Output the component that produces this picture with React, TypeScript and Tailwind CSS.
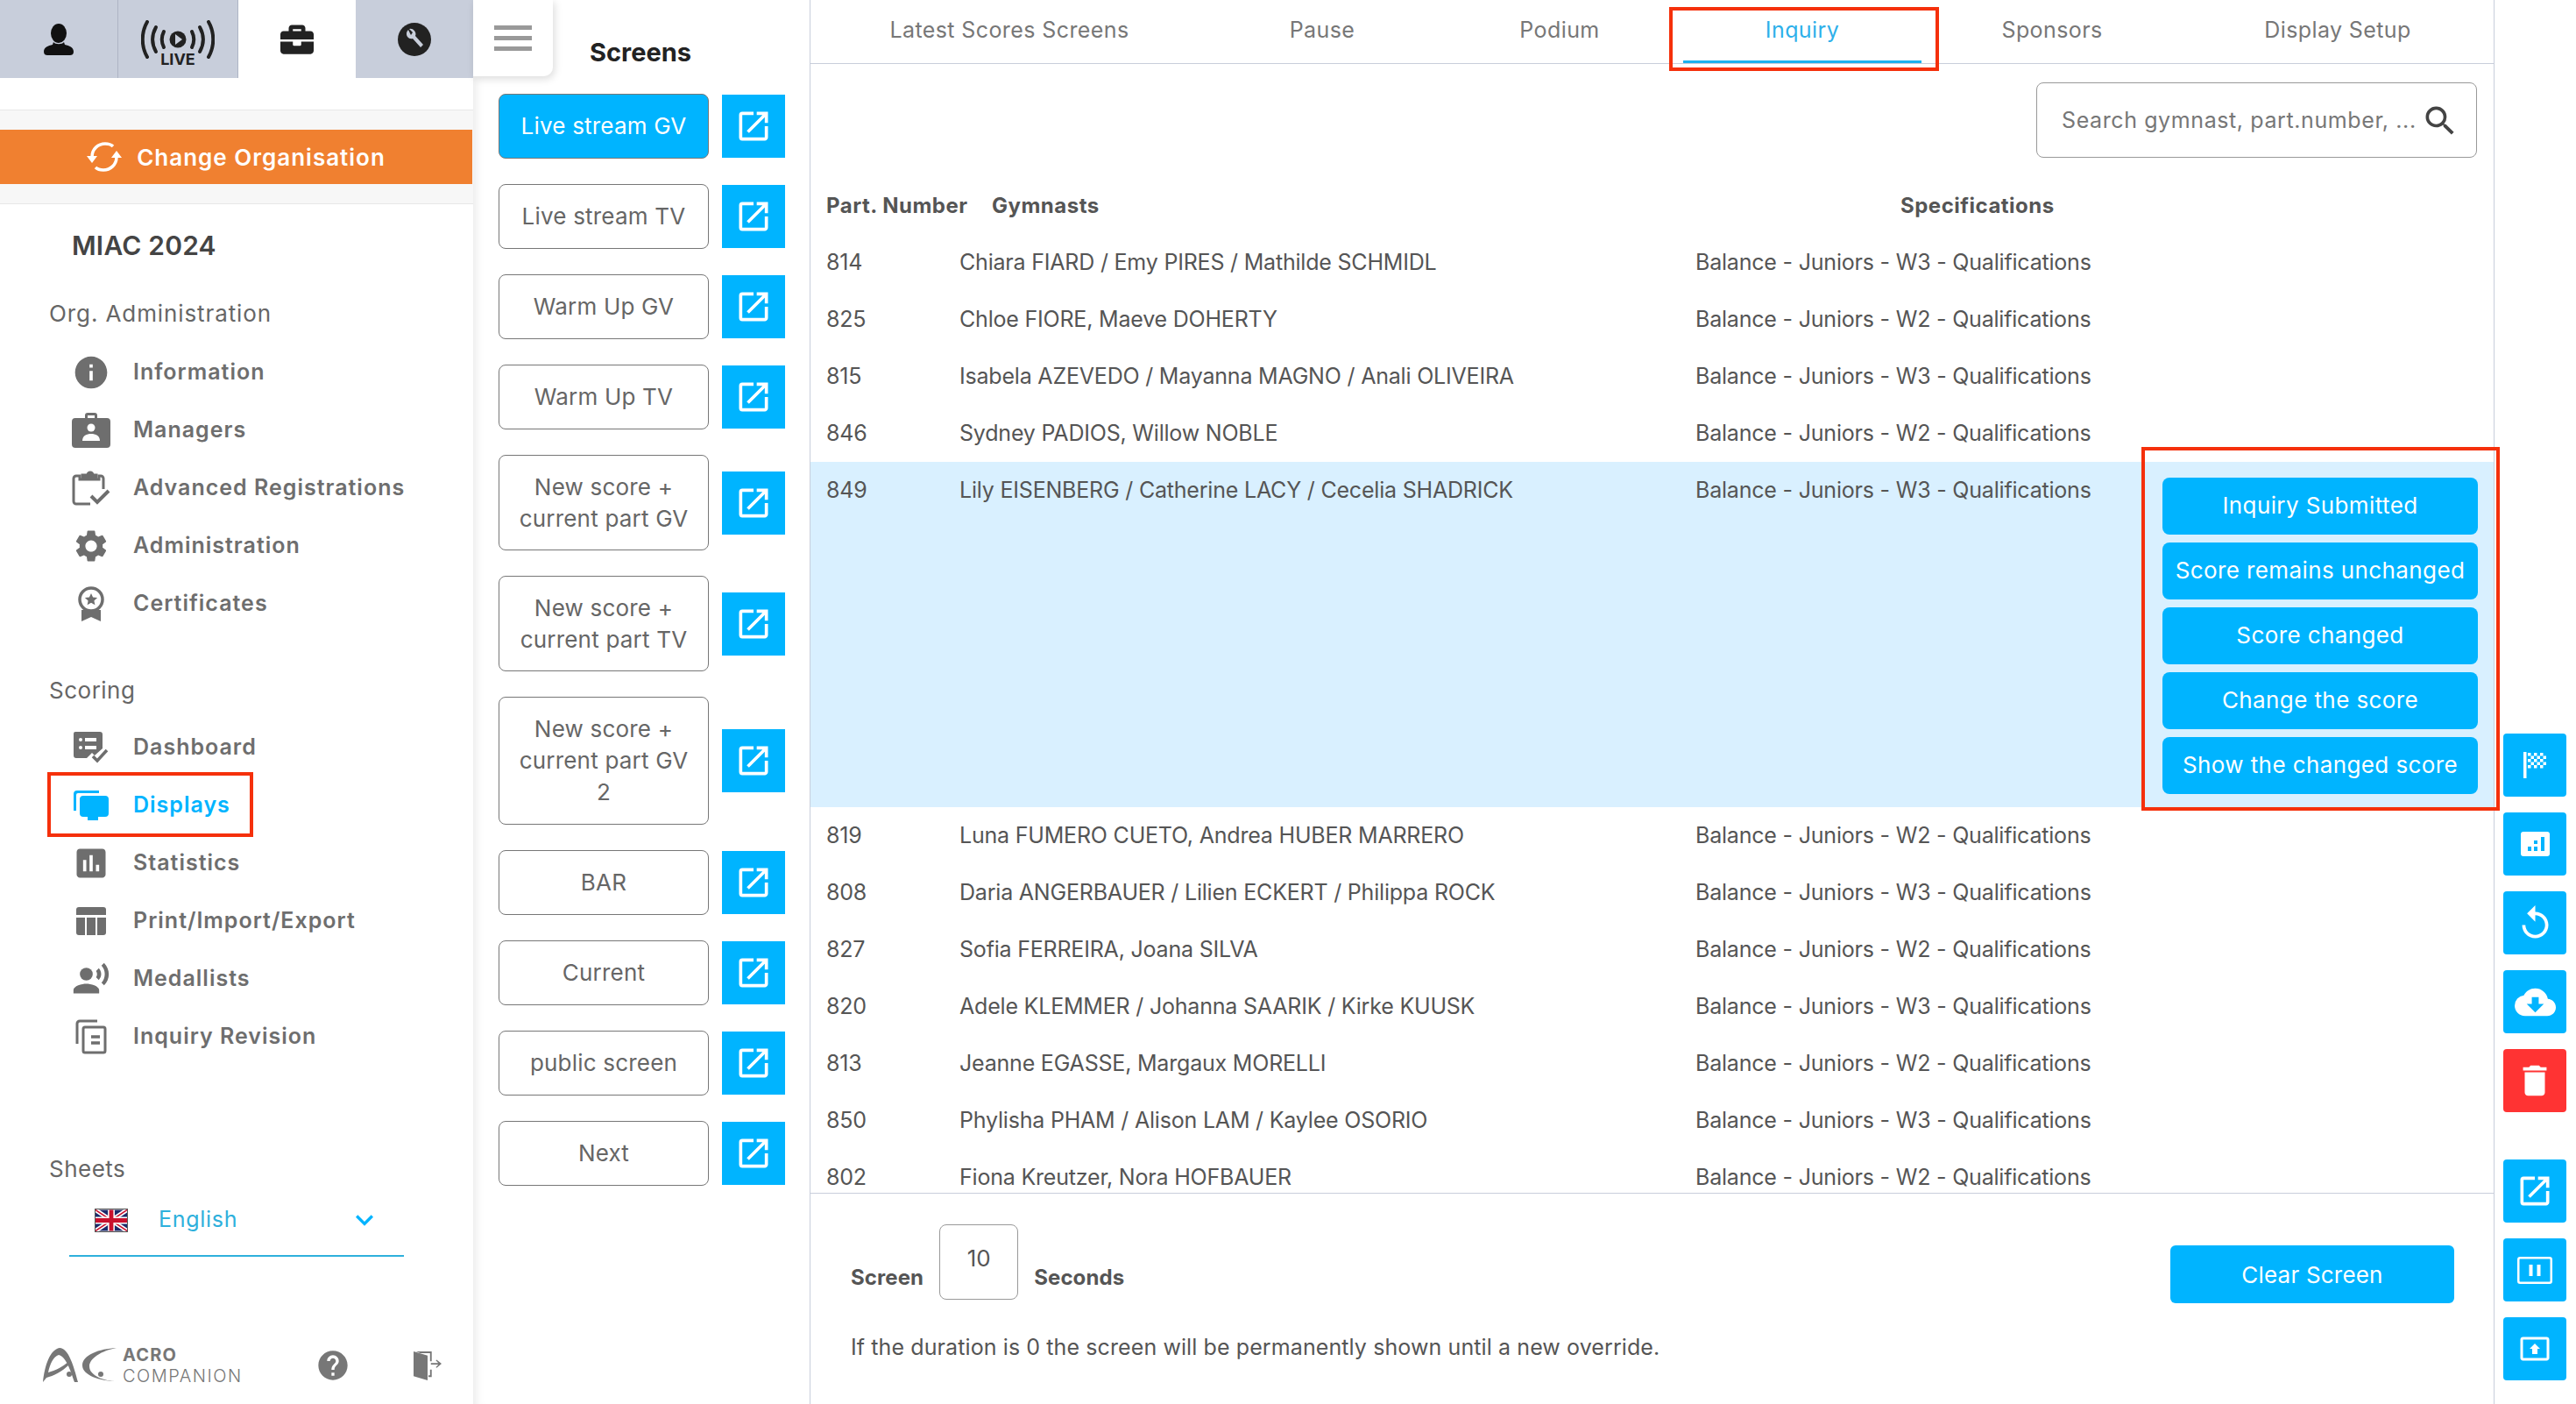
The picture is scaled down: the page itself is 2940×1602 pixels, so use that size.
import {
  MdAssessment,
  MdCloudDownload,
  MdDelete,
  MdHelp,
  MdInfo,
  MdKeyboardArrowDown,
  MdOpenInNew,
  MdPresentToAll,
  MdRecordVoiceOver,
  MdReplay,
  MdSearch,
  MdSettings,
} from "react-icons/md";
import { FaBriefcase } from "react-icons/fa";
import type { ReactNode } from "react";

const tabs = [
  { label: "Latest Scores Screens", w: "w-[454px]" },
  { label: "Pause", w: "w-[260px]" },
  { label: "Podium", w: "w-[282px]" },
  { label: "Inquiry", w: "w-[272px]", active: true },
  { label: "Sponsors", w: "w-[298px]" },
  { label: "Display Setup", w: "w-[354px]" },
];

const screens = [
  { label: "Live stream GV", h: "h-[74px]", active: true },
  { label: "Live stream TV", h: "h-[74px]" },
  { label: "Warm Up GV", h: "h-[74px]" },
  { label: "Warm Up TV", h: "h-[74px]" },
  { label: "New score + current part GV", h: "h-[109px]" },
  { label: "New score + current part TV", h: "h-[109px]" },
  { label: "New score + current part GV 2", h: "h-[146px]" },
  { label: "BAR", h: "h-[74px]" },
  { label: "Current", h: "h-[74px]" },
  { label: "public screen", h: "h-[74px]" },
  { label: "Next", h: "h-[74px]" },
];

const before = [
  ["814", "Chiara FIARD / Emy PIRES / Mathilde SCHMIDL", "W3"],
  ["825", "Chloe FIORE, Maeve DOHERTY", "W2"],
  ["815", "Isabela AZEVEDO / Mayanna MAGNO / Anali OLIVEIRA", "W3"],
  ["846", "Sydney PADIOS, Willow NOBLE", "W2"],
];

const after = [
  ["819", "Luna FUMERO CUETO, Andrea HUBER MARRERO", "W2"],
  ["808", "Daria ANGERBAUER / Lilien ECKERT / Philippa ROCK", "W3"],
  ["827", "Sofia FERREIRA, Joana SILVA", "W2"],
  ["820", "Adele KLEMMER / Johanna SAARIK / Kirke KUUSK", "W3"],
  ["813", "Jeanne EGASSE, Margaux MORELLI", "W2"],
  ["850", "Phylisha PHAM / Alison LAM / Kaylee OSORIO", "W3"],
  ["802", "Fiona Kreutzer, Nora HOFBAUER", "W2"],
];

const inquiryActions = [
  "Inquiry Submitted",
  "Score remains unchanged",
  "Score changed",
  "Change the score",
  "Show the changed score",
];

function PersonIcon() {
  return (
    <svg width="34" height="36" viewBox="0 0 34 36" fill="#111">
      <ellipse cx="17" cy="11" rx="9" ry="11" />
      <path d="M11 21c2 3 10 3 12 0l1 3c5 1 10 3 10 8 0 3-2 4-4 4H4c-2 0-4-1-4-4 0-5 5-7 10-8z" />
    </svg>
  );
}

function LiveIcon() {
  return (
    <svg width="84" height="44" viewBox="0 0 84 44" fill="none" stroke="#222" strokeLinecap="round">
      <path d="M7 2C0 14 0 30 7 42M77 2c7 12 7 28 0 40" strokeWidth="4" />
      <path d="M17 8c-5 9-5 19 0 28M67 8c5 9 5 19 0 28" strokeWidth="4" />
      <path d="M26 13c-3 6-3 12 0 18M58 13c3 6 3 12 0 18" strokeWidth="4" />
      <circle cx="42" cy="22" r="9.5" fill="#222" stroke="none" />
      <path d="M39 16l8 6-8 6z" fill="#c8cedb" stroke="none" />
    </svg>
  );
}

function WrenchIcon() {
  return (
    <svg width="38" height="38" viewBox="0 0 38 38">
      <circle cx="19" cy="19" r="19" fill="#222" />
      <path d="M12 8a6 6 0 0 0-1 8 6 6 0 0 0 6 2l9 10 3-3-9-10a6 6 0 0 0-7-8l4 4-2 3-3-6z" fill="#c8cedb" />
    </svg>
  );
}

function SwapIcon() {
  return (
    <svg width="40" height="36" viewBox="0 0 40 36" fill="none" stroke="#fff" strokeWidth="3.5">
      <path d="M6 18C6 9 13 3 21 3c4 0 7 1 9 3" />
      <path d="M34 18c0 9-7 15-15 15-4 0-7-1-9-3" />
      <path d="M0 17h12l-6 8zM28 19h12l-6-8z" fill="#fff" stroke="none" />
    </svg>
  );
}

function ManagersIcon() {
  return (
    <svg width="44" height="40" viewBox="0 0 44 40" fill="currentColor">
      <path d="M15 6V3a3 3 0 0 1 3-3h8a3 3 0 0 1 3 3v3h11a4 4 0 0 1 4 4v26a4 4 0 0 1-4 4H4a4 4 0 0 1-4-4V10a4 4 0 0 1 4-4zm3 0h8V3h-8z" />
      <circle cx="22" cy="17" r="4.5" fill="#fff" />
      <path d="M12 32c0-6 5-8 10-8s10 2 10 8z" fill="#fff" />
    </svg>
  );
}

function ClipboardIcon() {
  return (
    <svg width="44" height="42" viewBox="0 0 44 42" fill="none" stroke="currentColor" strokeWidth="3">
      <path d="M21 39H5a3 3 0 0 1-3-3V10a3 3 0 0 1 3-3h4v4h22V7h2a3 3 0 0 1 3 3v12" />
      <path d="M12 9V6h6a3 3 0 0 1 6 0h4v4H12z" fill="currentColor" />
      <path d="M22 30l7 7 13-13" strokeWidth="4" />
    </svg>
  );
}

function CertificateIcon() {
  return (
    <svg width="32" height="40" viewBox="0 0 32 40" fill="currentColor">
      <circle cx="16" cy="15" r="13" fill="none" stroke="currentColor" strokeWidth="3.5" />
      <path d="M16 8l2.1 4.6 5 .5-3.7 3.3 1 4.9-4.4-2.5-4.4 2.5 1-4.9-3.7-3.3 5-.5z" />
      <path d="M5 27h22v13l-11-5-11 5z" />
    </svg>
  );
}

function DashboardIcon() {
  return (
    <svg width="40" height="36" viewBox="0 0 40 36" fill="currentColor">
      <path d="M2 0h28a3 3 0 0 1 3 3v16l-9 8-3-3-6 6H3a3 3 0 0 1-3-3V2a2 2 0 0 1 2-2z" />
      <circle cx="8" cy="9" r="2" fill="#fff" />
      <circle cx="8" cy="18" r="2" fill="#fff" />
      <path d="M13 7h13v4H13zM13 16h13v4H13z" fill="#fff" />
      <path d="M22 28l5 5 11-12" fill="none" stroke="currentColor" strokeWidth="3.5" />
    </svg>
  );
}

function DisplaysIcon() {
  return (
    <svg width="40" height="36" viewBox="0 0 40 36" fill="currentColor">
      <path d="M0 24V5a4 4 0 0 1 4-4h25v3H5a2 2 0 0 0-2 2v18z" />
      <path d="M11 7h25a4 4 0 0 1 4 4v16a4 4 0 0 1-4 4h-8v4H16v-4h-5a4 4 0 0 1-4-4V11a4 4 0 0 1 4-4z" />
    </svg>
  );
}

function PrintIcon() {
  return (
    <svg width="34" height="32" viewBox="0 0 34 32" fill="currentColor">
      <path d="M3 0h28a3 3 0 0 1 3 3v6H0V3a3 3 0 0 1 3-3z" />
      <path d="M0 12h10v20H3a3 3 0 0 1-3-3zM12 12h10v20H12zM24 12h10v17a3 3 0 0 1-3 3h-7z" />
    </svg>
  );
}

function InquiryIcon() {
  return (
    <svg width="36" height="40" viewBox="0 0 36 40" fill="none" stroke="currentColor" strokeWidth="3">
      <path d="M2 28V5a3 3 0 0 1 3-3h20" />
      <rect x="9" y="9" width="25" height="29" rx="2" />
      <path d="M18 20h10M18 27h10" strokeWidth="3.5" />
    </svg>
  );
}

function DoorIcon() {
  return (
    <svg width="32" height="36" viewBox="0 0 34 36" fill="currentColor">
      <path d="M0 1l17 5v30L0 31z" />
      <path d="M3 1h19v12h-2V3H8zM22 23v9h-4v-2h2v-7z" />
      <path d="M21 15h9l-3-3 1-1 6 5-6 5-1-1 3-3h-9z" />
    </svg>
  );
}

function UkFlag() {
  return (
    <svg width="38" height="27" viewBox="0 0 60 40" className="border border-[#555]">
      <rect width="60" height="40" fill="#1b2a6b" />
      <path d="M0 0l60 40M60 0L0 40" stroke="#fff" strokeWidth="8" />
      <path d="M0 0l60 40M60 0L0 40" stroke="#c8102e" strokeWidth="2.5" />
      <path d="M30 0v40M0 20h60" stroke="#fff" strokeWidth="13" />
      <path d="M30 0v40M0 20h60" stroke="#c8102e" strokeWidth="8" />
    </svg>
  );
}

function AcroLogo() {
  return (
    <div className="flex w-[230px] items-center gap-[7px] text-[#777]">
      <svg width="85" height="40" viewBox="0 0 85 40" fill="currentColor" className="shrink-0">
        <path d="M1 39C3 20 9 2 20 0c10 0 16 20 21 39h-4C32 24 27 10 19 8 13 10 9 18 7 28c8-2 17-7 23-12l1 3C23 27 13 32 5 34z" />
        <circle cx="31" cy="30" r="3" />
        <path d="M85 0C65 1 46 8 46 20c0 11 20 18 39 18-13 0-31-6-31-17C54 12 68 3 85 0z" />
        <circle cx="67" cy="30" r="3" />
      </svg>
      <div className="flex flex-col">
        <span className="text-[20px] font-bold leading-[24px] tracking-[1.2px]">ACRO</span>
        <span className="text-[20px] font-light leading-[24px] tracking-[1.5px]">COMPANION</span>
      </div>
    </div>
  );
}

function NavItem({ icon, label, active }: { icon: ReactNode; label: string; active?: boolean }) {
  return (
    <div className={`flex h-[66px] items-center ${active ? "text-[#00b4ff]" : "text-[#6e6e6e]"}`}>
      <div className="flex w-[152px] justify-center pl-[56px]">{icon}</div>
      <span className="text-[25px] font-semibold tracking-[1px]">{label}</span>
    </div>
  );
}

function SideButton({ children, red }: { children: ReactNode; red?: boolean }) {
  return (
    <div className={`flex size-[72px] items-center justify-center rounded-[4px] text-white ${red ? "bg-[#ff3333]" : "bg-[#00b4ff]"}`}>
      {children}
    </div>
  );
}

function Row({ num, name, level }: { num: string; name: string; level: string }) {
  return (
    <div className="flex h-[65px] shrink-0 items-center pl-[18px] text-[25px] tracking-[-0.2px] text-[#555]">
      <span className="w-[152px]">{num}</span>
      <span className="w-[840px]">{name}</span>
      <span>Balance - Juniors - {level} - Qualifications</span>
    </div>
  );
}

function CheckerFlag() {
  const cells: ReactNode[] = [];
  for (let r = 0; r < 5; r++) {
    for (let c = 0; c < 6; c++) {
      if ((r + c) % 2 === 0) {
        cells.push(<rect key={`${r}-${c}`} x={5 + c * 3.5} y={1 + r * 3.5} width="3.5" height="3.5" />);
      }
    }
  }
  return (
    <svg width="27" height="30" viewBox="0 0 27 30" fill="#fff">
      <rect x="0" y="0" width="3.5" height="30" />
      {cells}
    </svg>
  );
}

export default function App() {
  return (
    <div className="relative flex h-[1602px] w-[2940px] overflow-hidden bg-white font-['Inter',sans-serif]">
      {/* left menu */}
      <aside className="flex w-[540px] shrink-0 flex-col">
        <div className="flex h-[89px] shrink-0 bg-[#c8cedb] text-[#222]">
          <div className="flex w-[135px] items-center justify-center border-r border-[#aeb5c5]">
            <PersonIcon />
          </div>
          <div className="flex w-[137px] flex-col items-center border-r border-[#aeb5c5] pt-[23px]">
            <LiveIcon />
            <span className="mt-[-8px] text-[18px] font-bold leading-[18px]">LIVE</span>
          </div>
          <div className="flex w-[134px] items-center justify-center bg-white">
            <FaBriefcase size={38} />
          </div>
          <div className="flex flex-1 items-center justify-center">
            <WrenchIcon />
          </div>
        </div>
        <div className="h-[37px] shrink-0 border-b border-[#e8e8e8]" />
        <div className="flex h-[107px] shrink-0 flex-col justify-center border-b border-[#e8e8e8] bg-[#f7f7f7]">
          <div className="mr-[1px] flex h-[62px] items-center justify-center gap-[17px] bg-[#f08030] text-[26px] font-semibold tracking-[1px] text-white">
            <SwapIcon />
            Change Organisation
          </div>
        </div>
        <div className="flex h-[72px] shrink-0 items-end pl-[82px] text-[30px] font-semibold leading-[50px] tracking-[0.2px] text-[#444]">
          MIAC 2024
        </div>
        <div className="flex h-[71px] shrink-0 items-end pl-[56px] text-[26px] leading-[36px] tracking-[0.9px] text-[#666]">
          Org. Administration
        </div>
        <div className="mt-[16px] flex flex-col">
          <NavItem icon={<MdInfo size={44} />} label="Information" />
          <NavItem icon={<ManagersIcon />} label="Managers" />
          <NavItem icon={<ClipboardIcon />} label="Advanced Registrations" />
          <NavItem icon={<MdSettings size={44} />} label="Administration" />
          <NavItem icon={<CertificateIcon />} label="Certificates" />
        </div>
        <div className="mt-[48px] pl-[56px] text-[26px] leading-[36px] tracking-[0.5px] text-[#666]">Scoring</div>
        <div className="mt-[14px] flex flex-col">
          <NavItem icon={<DashboardIcon />} label="Dashboard" />
          <NavItem icon={<DisplaysIcon />} label="Displays" active />
          <NavItem icon={<MdAssessment size={44} />} label="Statistics" />
          <NavItem icon={<PrintIcon />} label="Print/Import/Export" />
          <NavItem icon={<MdRecordVoiceOver size={44} />} label="Medallists" />
          <NavItem icon={<InquiryIcon />} label="Inquiry Revision" />
        </div>
        <div className="mt-[100px] pl-[56px] text-[26px] leading-[36px] tracking-[0.5px] text-[#666]">Sheets</div>
        <div className="ml-[79px] mt-[20px] flex h-[62px] w-[382px] items-center border-b-2 border-[#2eb0dc] pb-[20px] pl-[29px] pr-[25px] text-[25px] tracking-[0.7px] text-[#2eb0dc]">
          <UkFlag />
          <span className="ml-[35px]">English</span>
          <MdKeyboardArrowDown size={40} className="ml-auto text-[#00b4ff]" />
        </div>
        <div className="ml-[48px] mt-[100px] flex items-center">
          <AcroLogo />
          <MdHelp size={40} className="ml-[82px] text-[#777]" />
          <div className="ml-[72px] text-[#777]">
            <DoorIcon />
          </div>
        </div>
      </aside>

      {/* screens column */}
      <section className="flex w-[385px] shrink-0 flex-col border-r border-[#c8cedb] shadow-[inset_12px_0_12px_-10px_rgba(0,0,0,0.1)]">
        <div className="flex h-[107px] shrink-0 items-start">
          <div className="flex h-[87px] w-[91px] flex-col items-center justify-center gap-[7px] rounded-br-[10px] bg-white shadow-[2px_3px_10px_rgba(0,0,0,0.14)]">
            <div className="h-[5px] w-[43px] bg-[#999]" />
            <div className="h-[5px] w-[43px] bg-[#999]" />
            <div className="h-[5px] w-[43px] bg-[#999]" />
          </div>
          <div className="ml-[42px] mt-[42px] text-[29px] font-bold leading-[36px] text-[#222]">Screens</div>
        </div>
        <div className="flex flex-col gap-[29px] pl-[29px]">
          {screens.map((s) => (
            <div key={s.label} className="flex items-center gap-[15px]">
              <div
                className={`flex w-[240px] items-center justify-center rounded-[8px] border border-[#777] px-[20px] text-center text-[26px] leading-[36px] tracking-[0.2px] ${s.h} ${
                  s.active ? "bg-[#00b4ff] text-white" : "text-[#666]"
                }`}
              >
                {s.label}
              </div>
              <div className="flex size-[72px] items-center justify-center bg-[#00b4ff] text-white">
                <MdOpenInNew size={44} />
              </div>
            </div>
          ))}
        </div>
      </section>

      {/* main content */}
      <main className="flex w-[1921px] shrink-0 flex-col">
        <nav className="flex h-[73px] shrink-0 border-b border-[#c8cedb]">
          {tabs.map((t) => (
            <div
              key={t.label}
              className={`flex items-center justify-center text-[25px] tracking-[0.4px] ${t.w} ${
                t.active ? "border-b-[3px] border-[#1ab2f0] text-[#2eb0ea]" : "pb-[2px] text-[#777]"
              }`}
            >
              {t.label}
            </div>
          ))}
        </nav>
        <div className="flex h-[131px] shrink-0 items-start justify-end pr-[19px] pt-[21px]">
          <div className="flex h-[86px] w-[503px] items-center rounded-[8px] border border-[#999] pl-[28px] pr-[19px] pt-[2px] text-[25px] tracking-[0.6px] text-[#777]">
            <span className="flex-1">Search gymnast, part.number, ...</span>
            <MdSearch size={44} className="text-[#444]" />
          </div>
        </div>
        <div className="flex h-[63px] shrink-0 items-center pb-[2px] pl-[18px] text-[24px] font-bold tracking-[0.5px] text-[#555]">
          <span className="w-[189px]">Part. Number</span>
          <span className="w-[1037px]">Gymnasts</span>
          <span>Specifications</span>
        </div>
        <div className="flex h-[1094px] min-h-0 flex-col overflow-hidden">
          {before.map((r) => (
            <Row key={r[0]} num={r[0]} name={r[1]} level={r[2]} />
          ))}
          <div className="flex h-[394px] shrink-0 items-start bg-[#d9f0ff] pl-[18px] text-[25px] tracking-[-0.2px] text-[#555]">
            <span className="w-[152px] leading-[65px]">849</span>
            <span className="w-[840px] leading-[65px]">Lily EISENBERG / Catherine LACY / Cecelia SHADRICK</span>
            <span className="w-[533px] leading-[65px]">Balance - Juniors - W3 - Qualifications</span>
            <div className="mt-[18px] flex w-[360px] flex-col gap-[9px]">
              {inquiryActions.map((a) => (
                <div key={a} className="flex h-[65px] items-center justify-center rounded-[8px] bg-[#00b4ff] pb-[2px] text-[26px] tracking-[0.4px] text-white">
                  {a}
                </div>
              ))}
            </div>
          </div>
          {after.map((r) => (
            <Row key={r[0]} num={r[0]} name={r[1]} level={r[2]} />
          ))}
        </div>
        <div className="flex flex-1 flex-col border-t border-[#c8cedb] pl-[46px] pr-[45px]">
          <div className="mt-[35px] flex items-end">
            <span className="pb-[7px] text-[24px] font-bold tracking-[0.1px] text-[#555]">Screen</span>
            <div className="ml-[18px] flex h-[86px] w-[90px] justify-center rounded-[8px] border border-[#999] pt-[18px] text-[26px] text-[#555]">
              10
            </div>
            <span className="ml-[18px] pb-[7px] text-[24px] font-bold tracking-[0.1px] text-[#555]">Seconds</span>
            <div className="mb-[-4px] ml-auto flex h-[66px] w-[324px] items-center justify-center rounded-[6px] bg-[#00b4ff] text-[26px] tracking-[0.2px] text-white">
              Clear Screen
            </div>
          </div>
          <p className="mt-[36px] text-[25px] leading-[36px] tracking-[0.1px] text-[#555]">
            If the duration is 0 the screen will be permanently shown until a new override.
          </p>
        </div>
      </main>

      {/* action rail */}
      <div className="flex w-[94px] shrink-0 flex-col justify-end gap-[18px] border-l border-[#c8cedb] pb-[27px] pl-[10px]">
        <SideButton>
          <CheckerFlag />
        </SideButton>
        <SideButton>
          <svg width="33" height="28" viewBox="0 0 33 28">
            <rect width="33" height="28" rx="3" fill="#fff" />
            <path d="M8 17h4v5H8zM15 10h4v4h-4zM15 17h4v5h-4zM23 6h4v16h-4z" fill="#00b4ff" />
          </svg>
        </SideButton>
        <SideButton>
          <MdReplay size={45} />
        </SideButton>
        <SideButton>
          <MdCloudDownload size={47} />
        </SideButton>
        <SideButton red>
          <MdDelete size={46} />
        </SideButton>
        <div className="mt-[36px]">
          <SideButton>
            <MdOpenInNew size={44} />
          </SideButton>
        </div>
        <SideButton>
          <svg width="40" height="31" viewBox="0 0 40 31" fill="none" stroke="#fff" strokeWidth="2.5">
            <rect x="1.25" y="1.25" width="37.5" height="28.5" rx="2" />
            <path d="M15.5 9v13M24.5 9v13" strokeWidth="4" />
          </svg>
        </SideButton>
        <SideButton>
          <MdPresentToAll size={36} />
        </SideButton>
      </div>

      {/* red annotation boxes */}
      <div className="absolute left-[54px] top-[881px] h-[74px] w-[235px] border-[4px] border-[#f5300b]" />
      <div className="absolute left-[1905px] top-[8px] h-[73px] w-[308px] border-[4px] border-[#f5300b]" />
      <div className="absolute left-[2444px] top-[510px] h-[415px] w-[409px] border-[4px] border-[#f5300b]" />
    </div>
  );
}
